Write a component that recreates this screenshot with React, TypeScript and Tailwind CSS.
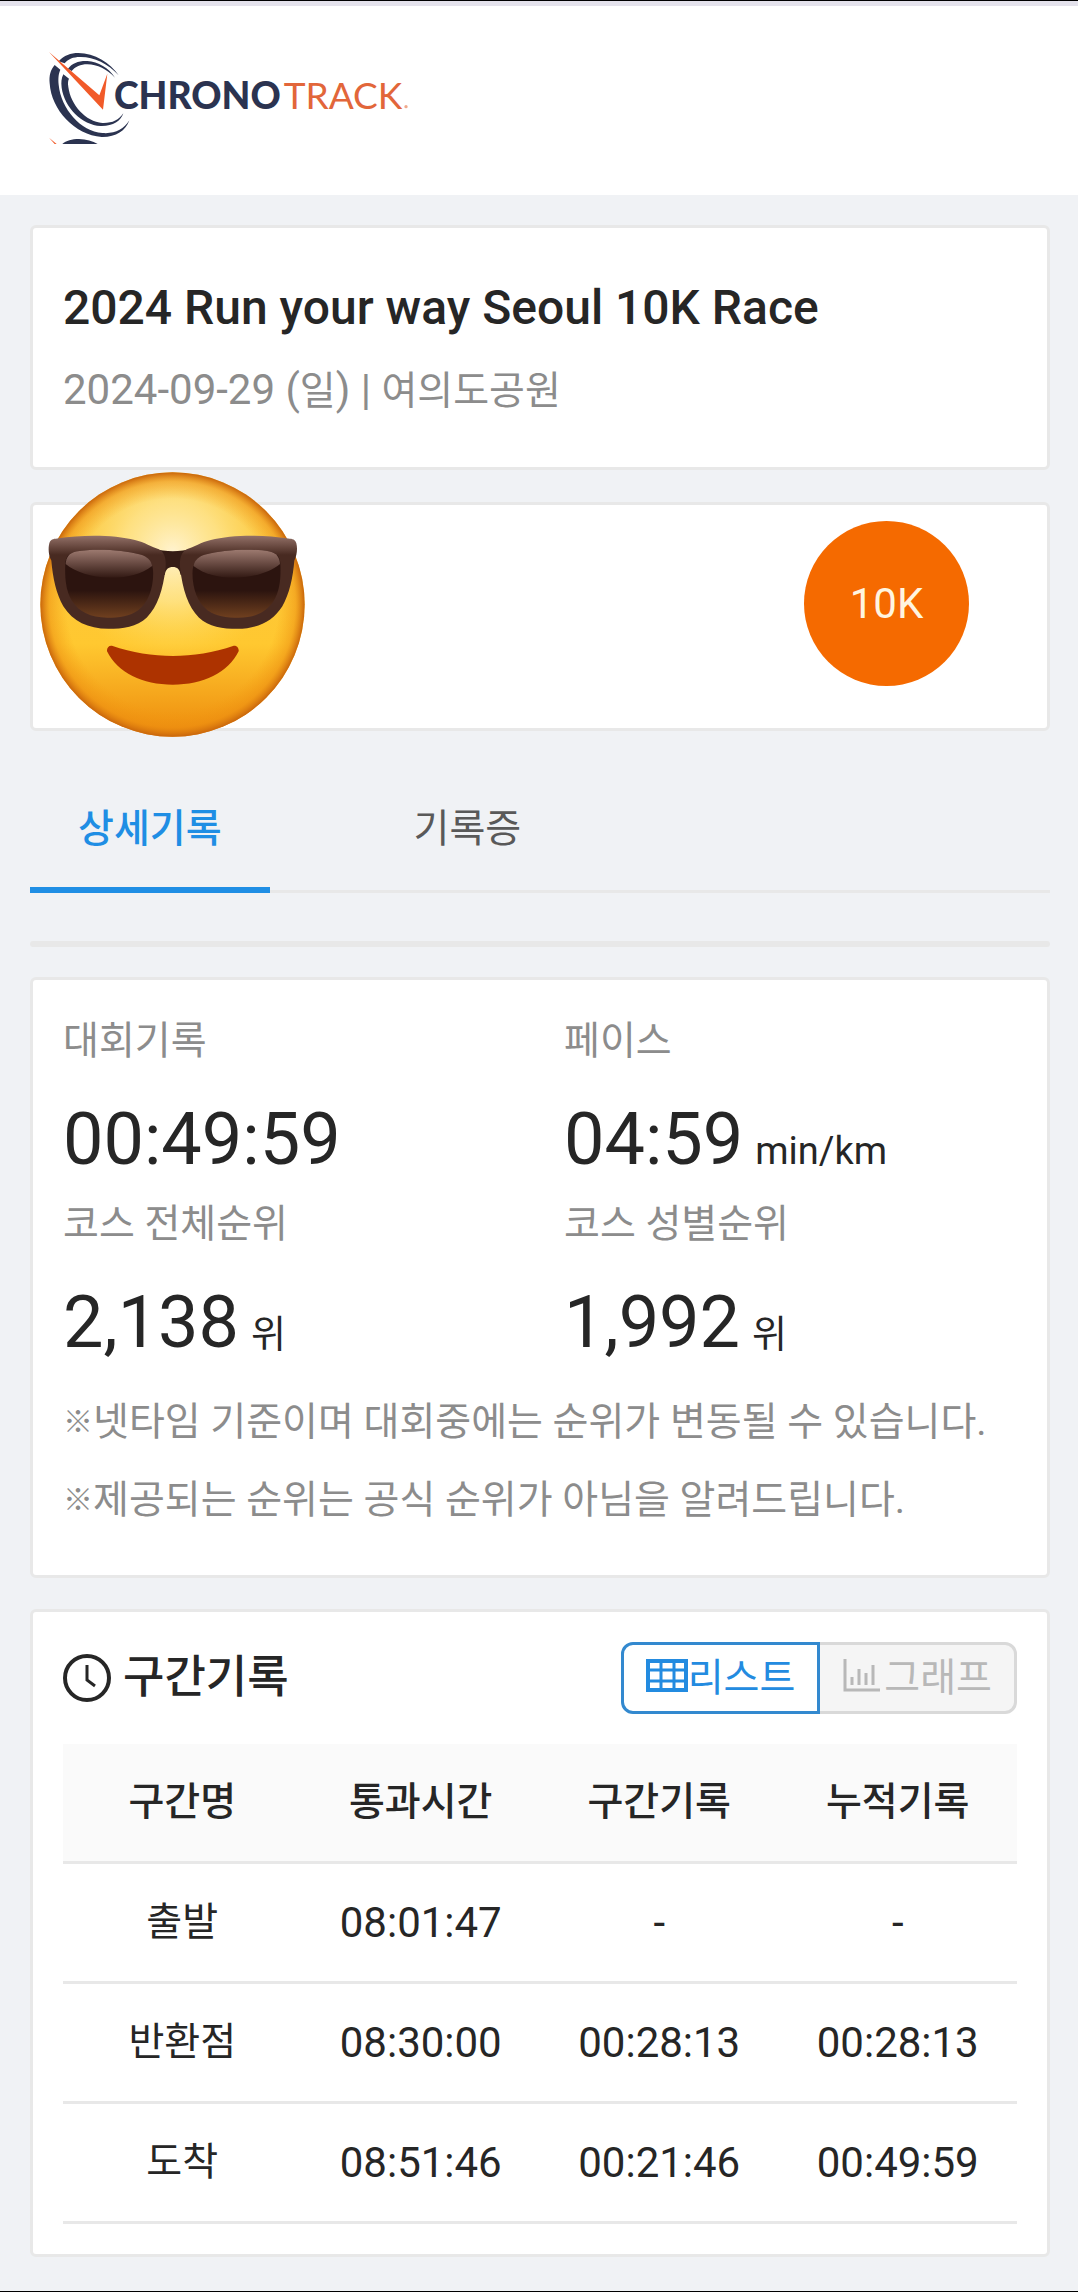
import React, { useState } from 'react';
import clsx from 'clsx';

const splits = [
  { name: '출발', passed: '08:01:47', split: '-', total: '-' },
  { name: '반환점', passed: '08:30:00', split: '00:28:13', total: '00:28:13' },
  { name: '도착', passed: '08:51:46', split: '00:21:46', total: '00:49:59' },
];

const stats = [
  { label: '대회기록', value: '00:49:59', unit: '' },
  { label: '페이스', value: '04:59', unit: 'min/km' },
  { label: '코스 전체순위', value: '2,138', unit: '위' },
  { label: '코스 성별순위', value: '1,992', unit: '위' },
];

const notes = [
  '넷타임 기준이며 대회중에는 순위가 변동될 수 있습니다.',
  '제공되는 순위는 공식 순위가 아님을 알려드립니다.',
];

const tabs = ['상세기록', '기록증'];

function Card({ className, children }: { className?: string; children?: React.ReactNode }) {
  return (
    <section className={clsx('rounded-md border-[3px] border-[#e8e8e8] bg-white', className)}>
      {children}
    </section>
  );
}

function Logo() {
  return (
    <svg viewBox="144 150 1092 288" className="h-24 w-[364px]" role="img" aria-label="ChronoTrack">
      <g fill="#2b3350">
        <path d="M176 184C192 166 212 159 235 159C284 160 330 187 356 226C324 190 280 170 240 171C219 171 205 177 194 190Z" />
        <path d="M204 206C216 190 236 182 262 183C294 185 327 204 345 233C321 207 292 194 262 193C241 193 226 200 215 213Z" />
        <path d="M164 195C151 210 147 227 149 250C154 330 224 405 305 411C346 412 377 394 388 361C371 389 344 402 307 399C242 394 183 326 176 254C174 233 176 220 181 209Z" />
        <path d="M190 223C184 235 183 247 185 263C193 322 246 375 302 378C338 379 362 364 370 340C356 361 336 370 307 369C257 365 212 315 205 261C203 248 204 242 207 236Z" />
        <path d="M187 432C198 422 216 417 237 417C259 418 278 423 293 432Z" />
      </g>
      <g fill="#f15a29">
        <path d="M147 156L298 286L322 221L309 329Z" />
        <path d="M147 413L170 432L164 432Z" />
      </g>
      <text x="342" y="326" fill="#2b3350" fontFamily="Lato, sans-serif" fontSize="112" fontWeight="900">
        CHRONO
      </text>
      <text x="851" y="326" fill="#e2663a" fontFamily="Lato, sans-serif" fontSize="111" fontWeight="400">
        TRACK
      </text>
      <circle cx="1218" cy="320" r="5" fill="#f0a98c" />
    </svg>
  );
}

function SunglassesFace() {
  return (
    <svg viewBox="60 36 796 796" className="absolute -top-[33px] left-[7px] size-[265px]" aria-hidden="true">
      <defs>
        <linearGradient id="base" x1="0" y1="0" x2="0" y2="1">
          <stop offset="0" stopColor="#f9c655" />
          <stop offset=".3" stopColor="#fcc63c" />
          <stop offset=".65" stopColor="#ffc830" />
          <stop offset="1" stopColor="#ed8a0c" />
        </linearGradient>
        <radialGradient id="glow" cx=".5" cy=".3" r=".42">
          <stop offset="0" stopColor="#fff3cf" />
          <stop offset=".45" stopColor="#ffe995" stopOpacity=".75" />
          <stop offset="1" stopColor="#ffdd50" stopOpacity="0" />
        </radialGradient>
        <radialGradient id="rim" cx=".5" cy=".5" r=".5">
          <stop offset=".8" stopColor="#f49a10" stopOpacity="0" />
          <stop offset=".93" stopColor="#ec8d10" stopOpacity=".5" />
          <stop offset="1" stopColor="#c9660c" />
        </radialGradient>
        <linearGradient id="frame" gradientUnits="userSpaceOnUse" x1="0" y1="228" x2="0" y2="285">
          <stop offset="0" stopColor="#927067" />
          <stop offset="1" stopColor="#482a21" />
        </linearGradient>
        <linearGradient id="lens" x1="0" y1="0" x2="0" y2="1">
          <stop offset="0" stopColor="#2c140f" />
          <stop offset=".6" stopColor="#2c140f" />
          <stop offset="1" stopColor="#70401f" />
        </linearGradient>
        <linearGradient id="shine" x1="0" y1="0" x2="0" y2="1">
          <stop offset="0" stopColor="#9d7a70" />
          <stop offset="1" stopColor="#331a14" />
        </linearGradient>
        <g id="glass">
          <path fill="url(#frame)" d="M88 250C91 239 99 237 112 236C190 223 285 225 345 240C374 247 396 261 417 268C434 276 440 298 437 325C430 388 413 440 381 473C351 502 309 507 265 507C204 506 159 485 130 439C109 403 98 353 94 302C86 287 84 265 88 250Z" />
          <path fill="url(#lens)" d="M136 310C137 291 147 280 168 275C225 264 310 270 361 284C389 292 400 310 400 341C400 388 384 429 355 451C330 469 298 474 262 474C211 473 178 457 156 423C137 392 134 353 136 310Z" />
          <path fill="url(#shine)" d="M137 312C139 292 147 280 168 275C225 264 310 270 361 284C382 290 393 300 397 318C364 343 322 354 268 353C214 351 167 337 137 312Z" />
        </g>
      </defs>
      <circle cx="458" cy="434" r="397" fill="url(#base)" />
      <circle cx="458" cy="434" r="397" fill="url(#glow)" />
      <circle cx="458" cy="434" r="397" fill="url(#rim)" />
      <path fill="#351c15" d="M400 266C438 277 480 277 518 266L500 350L482 345C480 328 472 321 459 321C446 321 437 328 435 345L418 350Z" />
      <use href="#glass" />
      <use href="#glass" transform="matrix(-1 0 0 1 918 0)" />
      <path fill="#ad3300" d="M276 558C398 599 520 599 642 558C651 557 657 564 657 574C625 640 550 675 459 675C368 675 293 640 261 574C261 563 267 557 276 558Z" />
    </svg>
  );
}

function ClockIcon() {
  return (
    <svg viewBox="0 0 48 48" className="size-12" fill="none" stroke="currentColor" aria-hidden="true">
      <circle cx="24" cy="24" r="22" strokeWidth="4" />
      <path d="M24 11V26L32 32" strokeWidth="3" />
    </svg>
  );
}

function TableIcon() {
  return (
    <svg viewBox="0 0 42 42" className="size-[42px]" fill="none" stroke="currentColor" aria-hidden="true">
      <rect x="2" y="4" width="38" height="29" strokeWidth="4" />
      <path d="M1 13H41M1 24H41M15 3V34M28 3V34" strokeWidth="3" />
    </svg>
  );
}

function ChartIcon() {
  return (
    <svg viewBox="0 0 42 42" className="size-[42px]" fill="none" stroke="currentColor" strokeWidth="3" aria-hidden="true">
      <path d="M3 2V33H38M10 28V20M17 28V12M24 28V16M31 28V8" />
    </svg>
  );
}

export default function App() {
  const [tab, setTab] = useState(tabs[0]);
  const [view, setView] = useState('list');

  const viewButton = (active: boolean) =>
    clsx(
      'flex h-[72px] items-center border-[3px] px-[22px] text-[39px] leading-none',
      active ? 'z-10 border-[#3389cf] bg-white text-[#238be0]' : 'border-[#d9d9d9] bg-[#f5f5f5] text-[#b8b8b8]'
    );

  return (
    <div className="min-h-screen border-y border-black bg-[#f0f2f5] font-[Roboto,'Noto_Sans_CJK_KR',sans-serif] text-[#262626]">
      <header className="border-t-[5px] border-[#e4e2ec] bg-white px-12 pt-11 pb-[49px]">
        <a href="#" className="inline-block align-top">
          <Logo />
        </a>
      </header>

      <main className="pt-[30px] pr-[28px] pb-[33px] pl-[30px]">
        <Card className="px-[30px] pt-[47px] pb-11">
          <h1 className="text-5xl leading-[66px] font-medium">2024 Run your way Seoul 10K Race</h1>
          <p className="mt-4 text-[42px] leading-[66px] text-[#8c8c8c]">
            2024-09-29 (<span className="text-[39px] leading-none">일</span>) |{' '}
            <span className="text-[39px] leading-none">여의도공원</span>
          </p>
        </Card>

        <Card className="relative mt-8 flex justify-end pt-4 pr-[78px] pb-[42px]">
          <SunglassesFace />
          <div className="flex size-[165px] items-center justify-center rounded-full bg-[#f56a00] text-[42px] text-[#fff5e0]">
            10K
          </div>
        </Card>

        <nav className="mt-[29px] flex gap-24 border-b-[3px] border-[#e8e8e8]" role="tablist">
          {tabs.map((name) => (
            <button
              key={name}
              role="tab"
              aria-selected={tab === name}
              onClick={() => setTab(name)}
              className={clsx(
                '-mb-[3px] border-b-[6px] px-12 pt-9 pb-[25px] text-[39px] leading-[66px]',
                tab === name ? 'border-[#1f8ee4] font-medium text-[#1f8ee4]' : 'border-transparent text-[#595959]'
              )}
            >
              {name}
            </button>
          ))}
        </nav>

        <Card className="mt-12" />

        <Card className="mt-[30px] px-[30px] pt-[31px] pb-9">
          <dl className="grid grid-cols-2 gap-x-12">
            {stats.map(({ label, value, unit }) => (
              <div key={label}>
                <dt className="text-[39px] leading-[60px] text-[#8c8c8c]">{label}</dt>
                <dd className="mt-[14px] text-7xl leading-[109px]">
                  {value}
                  {unit && <span className="ml-3 text-[38px] leading-none">{unit}</span>}
                </dd>
              </div>
            ))}
          </dl>
          <div className="mt-[6px] text-[39px] leading-[78px] text-[#8c8c8c]">
            {notes.map((note) => (
              <p key={note}>
                <span className="align-[3px] text-3xl leading-none font-medium">※</span>
                {note}
              </p>
            ))}
          </div>
        </Card>

        <Card className="mt-[31px] p-[30px]">
          <div className="flex items-center justify-between">
            <h2 className="flex items-center gap-3 text-[45px] leading-[72px] font-medium">
              <ClockIcon />
              구간기록
            </h2>
            <div className="flex">
              <button onClick={() => setView('list')} className={clsx('rounded-l-xl', viewButton(view === 'list'))}>
                <TableIcon />
                리스트
              </button>
              <button
                onClick={() => setView('graph')}
                className={clsx('-ml-[3px] rounded-r-xl', viewButton(view === 'graph'))}
              >
                <ChartIcon />
                그래프
              </button>
            </div>
          </div>

          <table className="mt-[30px] w-full table-fixed text-center">
            <thead className="bg-[#fafafa] text-[39px]">
              <tr className="h-[118px] border-b-[3px] border-[#e8e8e8]">
                <th className="font-medium">구간명</th>
                <th className="font-medium">통과시간</th>
                <th className="font-medium">구간기록</th>
                <th className="font-medium">누적기록</th>
              </tr>
            </thead>
            <tbody className="text-[42px]">
              {splits.map((row) => (
                <tr key={row.name} className="h-[120px] border-b-[3px] border-[#e8e8e8]">
                  <td className="text-[39px]">{row.name}</td>
                  <td>{row.passed}</td>
                  <td>{row.split}</td>
                  <td>{row.total}</td>
                </tr>
              ))}
            </tbody>
          </table>
        </Card>
      </main>
    </div>
  );
}
